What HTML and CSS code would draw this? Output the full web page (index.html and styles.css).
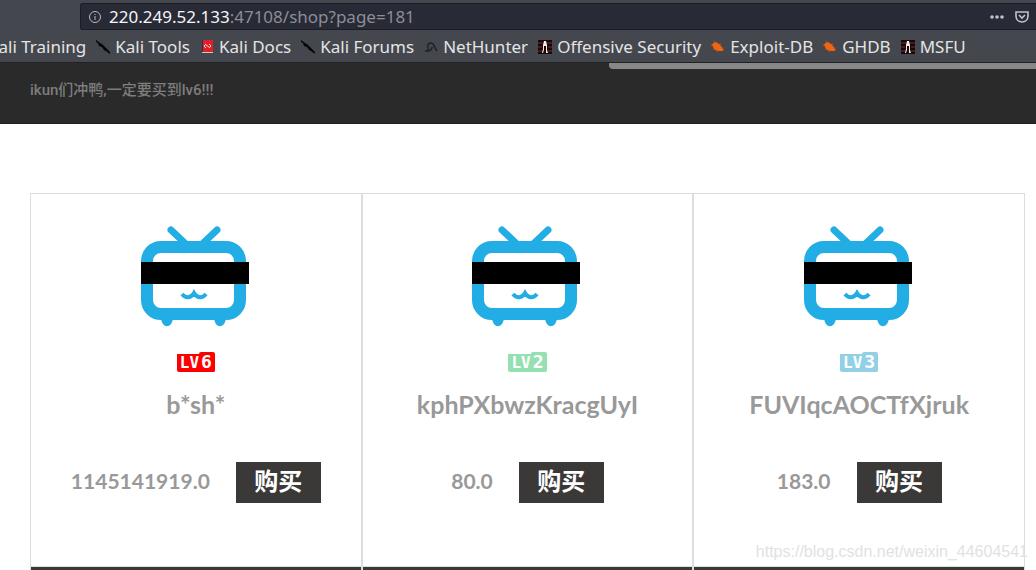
FILE: index.html
```html
<!DOCTYPE html>
<html lang="zh-CN">
<head>
<meta charset="utf-8">
<title>Shop</title>
<link rel="stylesheet" href="styles.css">
</head>
<body>
<svg class="defs" aria-hidden="true">
  <symbol id="dragon" viewBox="0 0 14 14"><path d="M0 0l4 3 2 1 3 3 2 2 3 3v2l-4-3-2-1-2-3-3-1-1-3-2-1z" fill="#050505"/></symbol>
  <symbol id="docs" viewBox="0 0 14 14"><path d="M2 0h11v13H2z" fill="#e01f26"/><path d="M2 0h1v13H2z" fill="#27305c"/><path d="M2 12h11v1H2z" fill="#c9c9cf"/><path d="M6 4L4 6l2 2M9 4l2 2-2 2M6 5l3 2" fill="none" stroke="#ffd0d0"/></symbol>
  <symbol id="hunter" viewBox="0 0 14 14"><path d="M1 11c3 0 4-1 3-3s0-5 3-5 3 4 6 8M3 11c3 0 5-1 5-4" fill="none" stroke="#202124" stroke-width="1.5"/></symbol>
  <symbol id="offsec" viewBox="0 0 14 14"><path d="M0 0h14v14H0z" fill="#210506"/><path d="M0 3h5M9 3h5M0 7h4M10 7h4M0 11h4M10 11h4" stroke="#5a3a3c"/><path d="M6 1h2l1 4v5l1 3H8V6H6v4l-1 3H4l1-4V5z" fill="#eee"/></symbol>
  <symbol id="bug" viewBox="0 0 14 14"><path d="M1 4l4-2 3 2 2 2 3 4-2 1-3 0-4-1-2-3z" fill="#f26411"/><path d="M2 6L0 5M4 3L3 1M8 4l2 0M4 9l-2 0M7 10l-1 2M10 8l2 0" stroke="#c95a1c"/></symbol>
  <symbol id="tv" viewBox="0 0 112 104">
    <path d="M31 5l18 17M77 5L59 22" stroke="#23ade5" stroke-width="7" stroke-linecap="round"/>
    <rect x="7" y="22" width="93" height="67" rx="14" fill="none" stroke="#23ade5" stroke-width="12"/>
    <path d="M21 93h12c-1 11-11 11-12 0M74 93h12c-1 11-11 11-12 0" fill="#23ade5"/>
    <path d="M42 69c4 5 9 4 12-1 3 5 8 6 12 1" fill="none" stroke="#23ade5" stroke-width="4"/>
    <path d="M1 37h108v22H1z" fill="#000"/>
  </symbol>
</svg>
<header class="browser">
  <div class="toolbar">
    <div class="address">
      <svg class="info" viewBox="0 0 14 14" aria-hidden="true"><circle cx="7" cy="7" r="5.5" fill="none" stroke="#b8b9bf"/><path d="M7 6v4M7 4v1" stroke="#b8b9bf"/></svg>
      <span class="url"><span class="host">220.249.52.133</span>:47108/shop?page=181</span>
      <button class="tool" aria-label="Page actions"><svg viewBox="0 0 16 16"><g fill="#c2c3c7"><circle cx="3" cy="8" r="1.8"/><circle cx="8" cy="8" r="1.8"/><circle cx="13" cy="8" r="1.8"/></g></svg></button>
      <button class="tool" aria-label="Save to Pocket"><svg viewBox="0 0 16 16" fill="none" stroke="#c2c3c7" stroke-width="1.6"><path d="M2 3h12v4c0 8-12 8-12 0z"/><path d="M5 6l3 3 3-3"/></svg></button>
    </div>
  </div>
  <nav class="bookmarks">
    <a href="#">Kali Training</a>
    <a href="#"><svg><use href="#dragon"/></svg>Kali Tools</a>
    <a href="#"><svg><use href="#docs"/></svg>Kali Docs</a>
    <a href="#"><svg><use href="#dragon"/></svg>Kali Forums</a>
    <a href="#"><svg><use href="#hunter"/></svg>NetHunter</a>
    <a href="#"><svg><use href="#offsec"/></svg>Offensive Security</a>
    <a href="#"><svg><use href="#bug"/></svg>Exploit-DB</a>
    <a href="#"><svg><use href="#bug"/></svg>GHDB</a>
    <a href="#"><svg><use href="#offsec"/></svg>MSFU</a>
  </nav>
</header>
<div class="banner">
  <div class="strip"></div>
  <p class="slogan">ikun们冲鸭,一定要买到lv6!!!</p>
</div>
<main class="goods">
  <article class="card">
    <div class="body">
      <svg class="tv" aria-hidden="true"><use href="#tv"/></svg>
      <span class="level lv6">LV<b>6</b></span>
      <h2 class="name">b*sh*</h2>
      <div class="buy"><span class="price">1145141919.0</span><button class="button">购买</button></div>
    </div>
    <div class="foot"></div>
  </article>
  <article class="card">
    <div class="body">
      <svg class="tv" aria-hidden="true"><use href="#tv"/></svg>
      <span class="level lv2">LV<b>2</b></span>
      <h2 class="name">kphPXbwzKracgUyI</h2>
      <div class="buy"><span class="price">80.0</span><button class="button">购买</button></div>
    </div>
    <div class="foot"></div>
  </article>
  <article class="card">
    <div class="body">
      <svg class="tv" aria-hidden="true"><use href="#tv"/></svg>
      <span class="level lv3">LV<b>3</b></span>
      <h2 class="name">FUVIqcAOCTfXjruk</h2>
      <div class="buy"><span class="price">183.0</span><button class="button">购买</button></div>
    </div>
    <div class="foot"></div>
  </article>
</main>
<div class="watermark">https://blog.csdn.net/weixin_44604541</div>
</body>
</html>
```
FILE: styles.css
```css
* { box-sizing: border-box; }
body {
  display: flex;
  flex-direction: column;
  height: 100vh;
  margin: 0;
  background: #fff;
  font-family: Lato, "Noto Sans CJK SC", sans-serif;
  overflow: hidden;
}
.defs { position: absolute; width: 0; height: 0; }
.browser {
  flex: none;
  background: #45474e;
  border-bottom: 1px solid #202124;
  font-family: "Noto Sans", sans-serif;
  font-size: 17px;
  overflow: hidden;
}
.toolbar { padding: 3px 0 0 80px; }
.address {
  display: flex;
  align-items: center;
  height: 27px;
  padding: 0 6px 0 7px;
  background: #282a36;
  border: 1px solid #1c1d24;
  border-right: 0;
  border-radius: 3px 0 0 3px;
}
.info { width: 14px; height: 14px; margin-right: 7px; }
.url { flex: 1; color: #8d8e94; white-space: nowrap; }
.host { color: #f5f5f6; }
.tool { border: 0; padding: 0; margin-left: 9px; background: none; width: 16px; height: 16px; }
.tool svg { display: block; width: 16px; height: 16px; }
.bookmarks {
  display: flex;
  gap: 10px;
  height: 32px;
  padding-top: 1px;
  margin-left: -12px;
  align-items: center;
  white-space: nowrap;
}
.bookmarks a { display: flex; align-items: center; gap: 5px; color: #e4e4e5; text-decoration: none; }
.bookmarks svg { width: 14px; height: 14px; }
.banner {
  flex: none;
  height: 61px;
  background: #2a2a2a;
  border-bottom: 1px solid #1f1f1f;
}
.strip {
  width: 41.2%;
  height: 6px;
  margin-left: auto;
  background: #888;
  border-bottom-left-radius: 4px;
}
.slogan {
  margin: 0;
  padding: 11px 30px 0;
  font: 500 15px/20px Roboto, "Noto Sans CJK SC", sans-serif;
  color: #7d7d7d;
}
.goods {
  flex: 1;
  min-height: 0;
  display: grid;
  grid-template-columns: repeat(3, 1fr);
  padding: 69px 11px 0 30px;
}
.card { display: flex; flex-direction: column; border: 1px solid #ddd; border-bottom: 0; }
.body {
  display: flex;
  flex-direction: column;
  align-items: center;
  padding: 31px 0 63px;
}
.tv { width: 112px; height: 104px; }
.level {
  display: flex;
  align-items: flex-end;
  height: 20px;
  margin-top: 23px;
  padding-left: 3px;
  border-radius: 2px;
  background: linear-gradient(var(--tone), var(--tone)) bottom / 100% 18px no-repeat;
  font: 700 16px/18px "DejaVu Sans Mono", monospace;
  color: #fff;
}
.level b { padding: 0 3px 0 2px; border-radius: 2px; background: var(--tone); font-size: 18px; line-height: 20px; }
.lv6 { --tone: #f00; }
.lv2 { --tone: #94e0b0; }
.lv3 { --tone: #92d1e5; }
.name { margin: 16px 0 0; font-size: 25px; line-height: 32px; color: #999; }
.buy { display: flex; align-items: center; gap: 26px; margin-top: 42px; }
.price { padding-bottom: 4px; font-size: 21px; font-weight: 700; color: #999; }
.button {
  width: 85px;
  height: 41px;
  padding: 0 0 6px;
  border: 0;
  background: #3a3937;
  color: #fff;
  font: 700 24px/34px "Noto Sans CJK SC", sans-serif;
}
.foot { flex: 1; border-top: 1px solid #ddd; background: #3a3937; }
.watermark {
  position: absolute;
  right: 8px;
  bottom: 8px;
  font: 16px/20px "Liberation Sans", sans-serif;
  color: #e2e2e2;
}
```
